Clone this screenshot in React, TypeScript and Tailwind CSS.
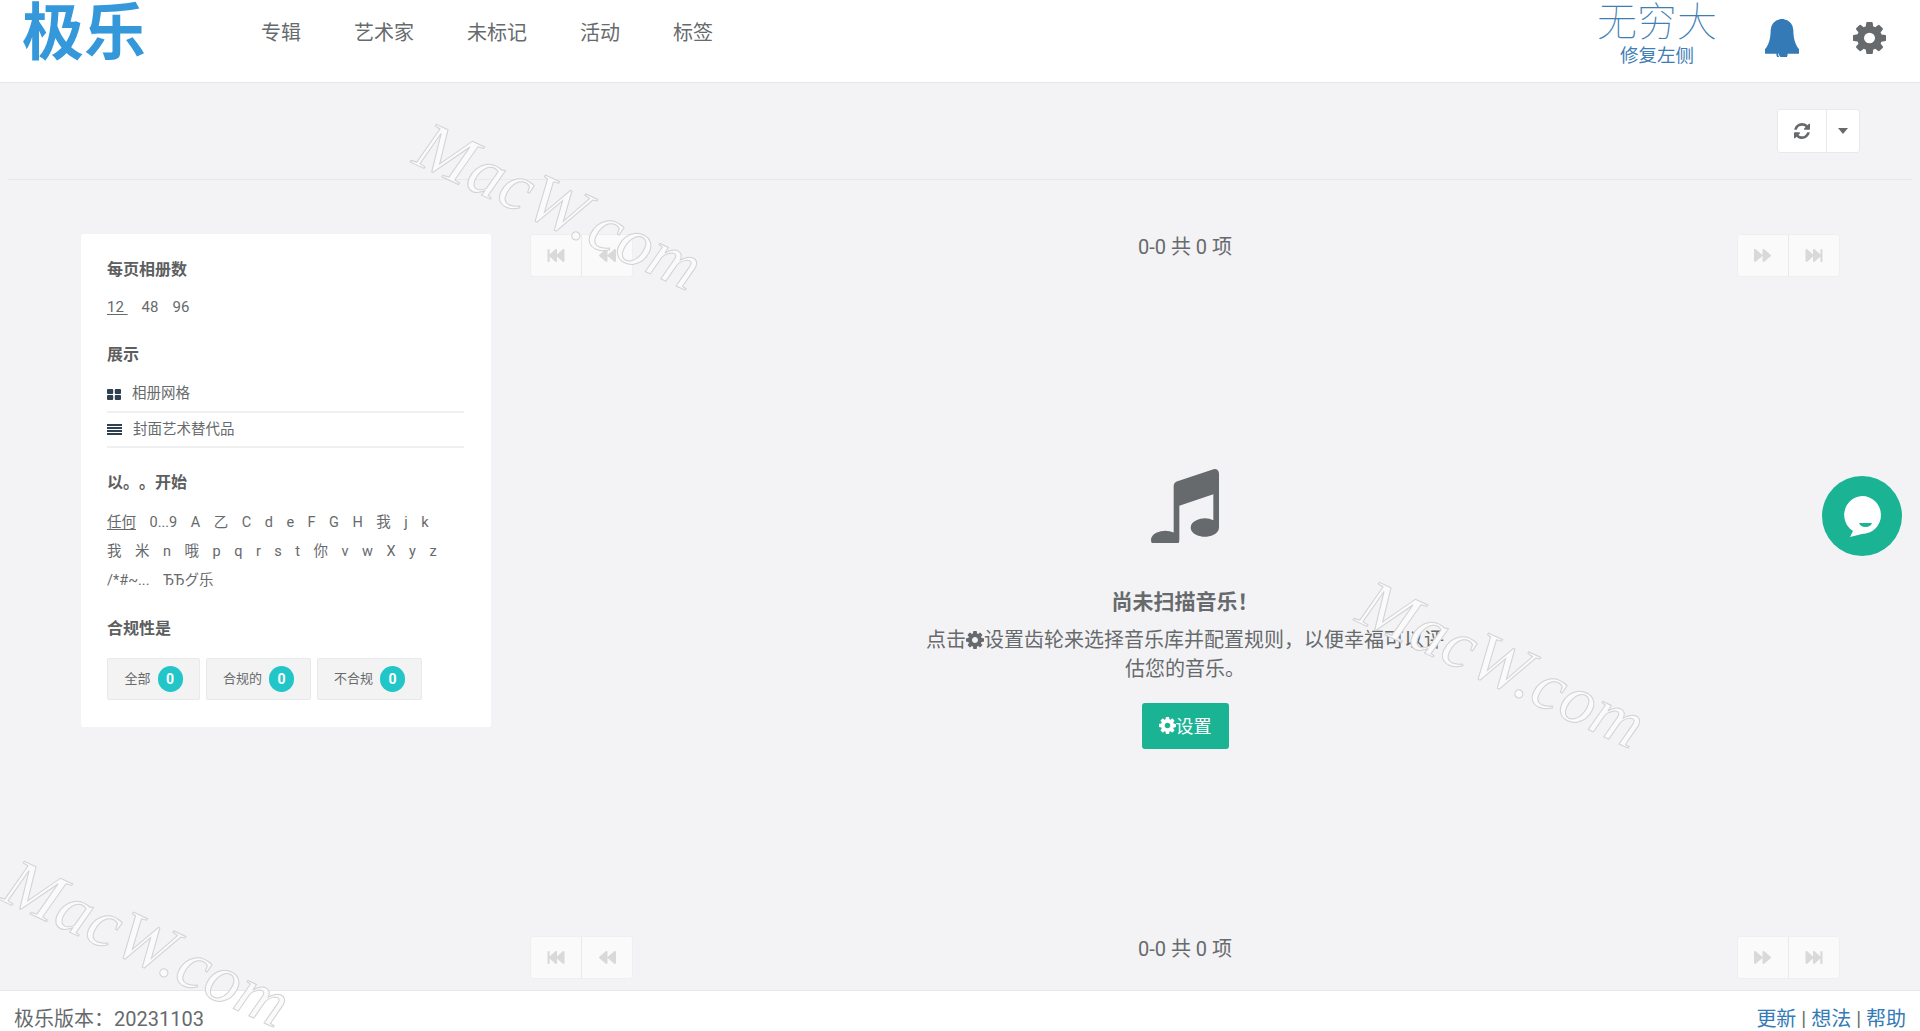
import {
  FaBackward,
  FaFastBackward,
  FaFastForward,
  FaForward,
} from 'react-icons/fa'

const COG =
  'M1152 896q0-106-75-181t-181-75-181 75-75 181 75 181 181 75 181-75 75-181zm512-109v222q0 12-8 23t-20 13l-185 28q-19 54-39 91 35 50 107 138 10 12 10 25t-9 23q-27 37-99 108t-94 71q-12 0-26-9l-138-108q-44 23-91 38-16 136-29 186-7 28-36 28h-222q-14 0-24.500-8.500t-11.500-21.500l-28-184q-49-16-90-37l-141 107q-10 9-25 9-14 0-25-11-126-114-165-168-7-10-7-23 0-12 8-23 15-21 51-66.500t54-70.500q-27-50-41-99l-183-27q-13-2-21-12.500t-8-23.500v-222q0-12 8-23t19-13l186-28q14-46 39-92-40-57-107-138-10-12-10-24 0-10 9-23 26-36 98.500-107.500t94.500-71.500q13 0 26 10l138 107q44-23 91-38 16-136 29-186 7-28 36-28h222q14 0 24.500 8.500t11.500 21.500l28 184q49 16 90 37l142-107q9-9 24-9 13 0 25 10 129 119 165 170 7 8 7 22 0 12-8 23-15 21-51 66.500t-54 70.500q26 50 41 98l183 28q13 2 21 12.500t8 23.500z'
const BELL =
  'M912 1696q0-16-16-16-59 0-101.500-42.500t-42.500-101.500q0-16-16-16t-16 16q0 73 51.500 124.500t124.500 51.500q16 0 16-16zm816-288q0 52-38 90t-90 38h-448q0 106-75 181t-181 75-181-75-75-181h-448q-52 0-90-38t-38-90q50-42 91-88t85-119.500 74.500-158.500 50-206 19.500-260q0-152 117-282.500t307-158.500q-8-19-8-39 0-40 28-68t68-28 68 28 28 68q0 20-8 39 190 28 307 158.500t117 282.500q0 139 19.500 260t50 206 74.500 158.500 85 119.500 91 88z'
const REFRESH =
  'M1639 1056q0 5-1 7-64 268-268 434.500t-478 166.500q-146 0-282.500-55t-243.500-157l-129 129q-19 19-45 19t-45-19-19-45v-448q0-26 19-45t45-19h448q26 0 45 19t19 45-19 45l-137 137q71 66 161 102t187 36q134 0 250-65t186-179q11-17 53-117 8-23 30-23h192q13 0 22.500 9.500t9.500 22.500zm25-800v448q0 26-19 45t-45 19h-448q-26 0-45-19t-19-45 19-45l138-138q-148-137-349-137-134 0-250 65t-186 179q-11 17-53 117-8 23-30 23h-199q-13 0-22.500-9.500t-9.500-22.500v-7q65-268 270-434.500t480-166.500q146 0 284 55.500t245 156.500l130-129q19-19 45-19t45 19 19 45z'
const MUSIC =
  'M1664 224v1120q0 50-34 89t-86 60.500-103.500 32-96.500 10.500-96.500-10.500-103.500-32-86-60.500-34-89 34-89 86-60.500 103.500-32 96.500-10.500q105 0 192 39v-537l-768 237v709q0 50-34 89t-86 60.500-103.500 32-96.500 10.500-96.500-10.500-103.500-32-86-60.500-34-89 34-89 86-60.500 103.500-32 96.500-10.500q105 0 192 39v-967q0-31 19-56.500t49-35.500l832-256q12-4 28-4 40 0 68 28t28 68z'

const Fa4 = ({ d, className }: { d: string; className: string }) => (
  <svg
    viewBox="128 128 1536 1536"
    preserveAspectRatio="none"
    fill="currentColor"
    className={className}
  >
    <path d={d} />
  </svg>
)

const Watermark = ({ className }: { className: string }) => (
  <div
    className={`pointer-events-none absolute z-10 rotate-[25deg] whitespace-nowrap [font-family:'Liberation_Serif',serif] text-[69px] leading-none text-[#fafafb] italic [-webkit-text-stroke:1px_#d2d2d4] ${className}`}
  >
    MacW.com
  </div>
)

const PagerGroup = ({ icons }: { icons: React.ReactNode[] }) => (
  <div className="flex h-[43px] w-[103px] rounded-[3px] border border-[#efeff0] bg-[#fafafa]">
    {icons.map((icon, i) => (
      <div
        key={i}
        className="flex flex-1 items-center justify-center border-[#e9e9ea] text-[#d9d9d9] not-first:border-l"
      >
        {icon}
      </div>
    ))}
  </div>
)

const Pager = () => (
  <div className="flex items-start justify-between">
    <PagerGroup
      icons={[
        <FaFastBackward key="first" className="h-[17px] w-[20px]" />,
        <FaBackward key="prev" className="h-[17px] w-[19px]" />,
      ]}
    />
    <div className="text-[20px] leading-[26px]">0-0 共 0 项</div>
    <PagerGroup
      icons={[
        <FaForward key="next" className="h-[17px] w-[19px]" />,
        <FaFastForward key="last" className="h-[17px] w-[20px]" />,
      ]}
    />
  </div>
)

const FilterTitle = ({ children }: { children: React.ReactNode }) => (
  <div className="text-[16px] leading-[22px] font-bold text-[#5c5e60] [text-spacing-trim:space-all]">
    {children}
  </div>
)

const LetterRow = ({ letters }: { letters: string[] }) => (
  <div className="flex h-[29px] items-center gap-[13.5px] text-[14.5px]">
    {letters.map((l, i) => (
      <span key={i} className={l === '任何' ? 'underline underline-offset-2' : ''}>
        {l}
      </span>
    ))}
  </div>
)

const StatusButton = ({ label, className }: { label: string; className: string }) => (
  <div
    className={`flex h-[42px] items-center justify-center gap-[7px] rounded-[2px] border border-[#e7eaec] bg-[#f3f3f4] text-[13px] ${className}`}
  >
    {label}
    <span className="flex h-[26px] w-[25px] items-center justify-center rounded-full bg-[#23c6c8] text-[14px] font-bold text-white">
      0
    </span>
  </div>
)

const Sidebar = () => (
  <div className="h-[493px] w-[410px] shrink-0 rounded-[2px] bg-white px-[26px] pt-[25px]">
    <FilterTitle>每页相册数</FilterTitle>
    <div className="mt-[16px] flex gap-[14px] text-[15px] leading-[20px]">
      <span className="underline underline-offset-2">12&nbsp;</span>
      <span>48</span>
      <span>96</span>
    </div>
    <div className="mt-[27px]">
      <FilterTitle>展示</FilterTitle>
    </div>
    <div className="mt-[11px] w-[357px] text-[14.5px]">
      <div className="flex h-[36px] items-center gap-[11px] border-b-2 border-[#f0f0f1]">
        <svg viewBox="0 0 14 11" className="h-[11px] w-[14px] fill-[#2f4050]">
          <rect width="6.2" height="5" rx="1" />
          <rect x="7.8" width="6.2" height="5" rx="1" />
          <rect y="6" width="6.2" height="5" rx="1" />
          <rect x="7.8" y="6" width="6.2" height="5" rx="1" />
        </svg>
        相册网格
      </div>
      <div className="flex h-[35px] items-center gap-[11px] border-b-2 border-[#f0f0f1]">
        <svg viewBox="0 0 15 11" className="h-[11px] w-[15px] fill-[#2f4050]">
          <rect width="15" height="2" />
          <rect y="3" width="15" height="2" />
          <rect y="6" width="15" height="2" />
          <rect y="9" width="15" height="2" />
        </svg>
        封面艺术替代品
      </div>
    </div>
    <div className="mt-[24px]">
      <FilterTitle>以。。开始</FilterTitle>
    </div>
    <div className="mt-[14px]">
      <LetterRow letters={['任何', '0...9', 'A', '乙', 'C', 'd', 'e', 'F', 'G', 'H', '我', 'j', 'k']} />
      <LetterRow letters={['我', '米', 'n', '哦', 'p', 'q', 'r', 's', 't', '你', 'v', 'w', 'X', 'y', 'z']} />
      <LetterRow letters={['/*#~...', 'ЂЂグ乐']} />
    </div>
    <div className="mt-[23px]">
      <FilterTitle>合规性是</FilterTitle>
    </div>
    <div className="mt-[18px] flex gap-[6px]">
      <StatusButton label="全部" className="w-[93px]" />
      <StatusButton label="合规的" className="w-[105px]" />
      <StatusButton label="不合规" className="w-[105px]" />
    </div>
  </div>
)

const EmptyState = () => (
  <div className="mt-[192px] flex flex-col items-center">
    <Fa4 d={MUSIC} className="h-[74px] w-[68px] text-[#676a6c]" />
    <div className="mt-[45px] text-[21px] leading-[28px] font-bold">尚未扫描音乐！</div>
    <div className="mt-[10px] w-[530px] text-center text-[20px] leading-[29px] [text-spacing-trim:space-all]">
      点击
      <Fa4 d={COG} className="inline h-[18px] w-[18px] align-[-2px]" />
      设置齿轮来选择音乐库并配置规则，以便幸福可以评估您的音乐。
    </div>
    <button className="mt-[19px] flex h-[46px] w-[87px] items-center justify-center rounded-[3px] bg-[#1ab394] pt-[1px] text-[18px] text-white">
      <Fa4 d={COG} className="mb-[3px] h-[17px] w-[17px]" />
      设置
    </button>
  </div>
)

export default function App() {
  return (
    <div className="relative flex h-[1031px] flex-col overflow-hidden bg-[#f3f3f5] [font-family:Roboto,'Noto_Sans_CJK_SC',sans-serif] text-[#676a6c]">
      <header className="flex h-[83px] shrink-0 items-center border-b border-[#e7e7e7] bg-white">
        <div className="mb-[15px] ml-[22px] w-[239px] text-[62px] leading-[62px] font-bold text-[#3498db]">
          极乐
        </div>
        <nav className="mb-[17px] flex gap-[53px] text-[20px]">
          <span>专辑</span>
          <span>艺术家</span>
          <span>未标记</span>
          <span>活动</span>
          <span>标签</span>
        </nav>
        <div className="mr-[34px] mb-[7px] ml-auto flex items-center">
          <div className="mb-[3px] flex flex-col items-center text-[#3f7db5]">
            <div className="text-[40px] leading-[40px] font-thin">无穷大</div>
            <div className="text-[18.5px] leading-[26px]">修复左侧</div>
          </div>
          <Fa4 d={BELL} className="mr-[54px] ml-[48px] h-[38px] w-[34px] text-[#337ab7]" />
          <Fa4 d={COG} className="h-[32px] w-[33px]" />
        </div>
      </header>

      <main className="flex-1">
        <div className="mx-[8px] flex h-[97px] justify-end border-b border-[#e7eaec] pt-[26px] pr-[52px]">
          <div className="flex h-[44px] w-[83px] rounded-[3px] border border-[#e9e9ea] bg-white">
            <div className="flex w-[49px] items-center justify-center border-r border-[#e7eaec]">
              <Fa4 d={REFRESH} className="h-[16px] w-[16px]" />
            </div>
            <div className="flex flex-1 items-center justify-center">
              <svg viewBox="0 0 10 6" className="h-[6px] w-[10px] fill-[#676a6c]">
                <path d="M0 0h10L5 6z" />
              </svg>
            </div>
          </div>
        </div>

        <div className="mt-[54px] ml-[81px] flex w-[1759px] gap-[39px]">
          <Sidebar />
          <div className="flex h-[745px] flex-1 flex-col">
            <Pager />
            <EmptyState />
            <div className="mt-auto">
              <Pager />
            </div>
          </div>
        </div>
      </main>

      <footer className="flex h-[41px] shrink-0 items-start justify-between border-t border-[#e7e7e7] bg-white px-[14px] pt-[14px] text-[20px] leading-[28px]">
        <div>极乐版本：20231103</div>
        <div>
          <span className="text-[#337ab7]">更新</span> | <span className="text-[#337ab7]">想法</span> |{' '}
          <span className="text-[#337ab7]">帮助</span>
        </div>
      </footer>

      <div className="absolute top-[476px] left-[1822px] flex h-[80px] w-[80px] items-center justify-center rounded-full bg-[#1ab394]">
        <svg viewBox="0 0 40 42" className="h-[42px] w-[40px]">
          <path
            d="M20 1a19 19 0 0 1 0 38l-12 3 3-6A19 19 0 0 1 20 1z"
            fill="#fff"
          />
          <path d="M17 28h13q-1.500 4-6.500 4T17 28z" fill="#1ab394" />
        </svg>
      </div>

      <Watermark className="top-[172px] left-[406px]" />
      <Watermark className="top-[630px] left-[1349px]" />
      <Watermark className="top-[909px] left-[-6px]" />
    </div>
  )
}
